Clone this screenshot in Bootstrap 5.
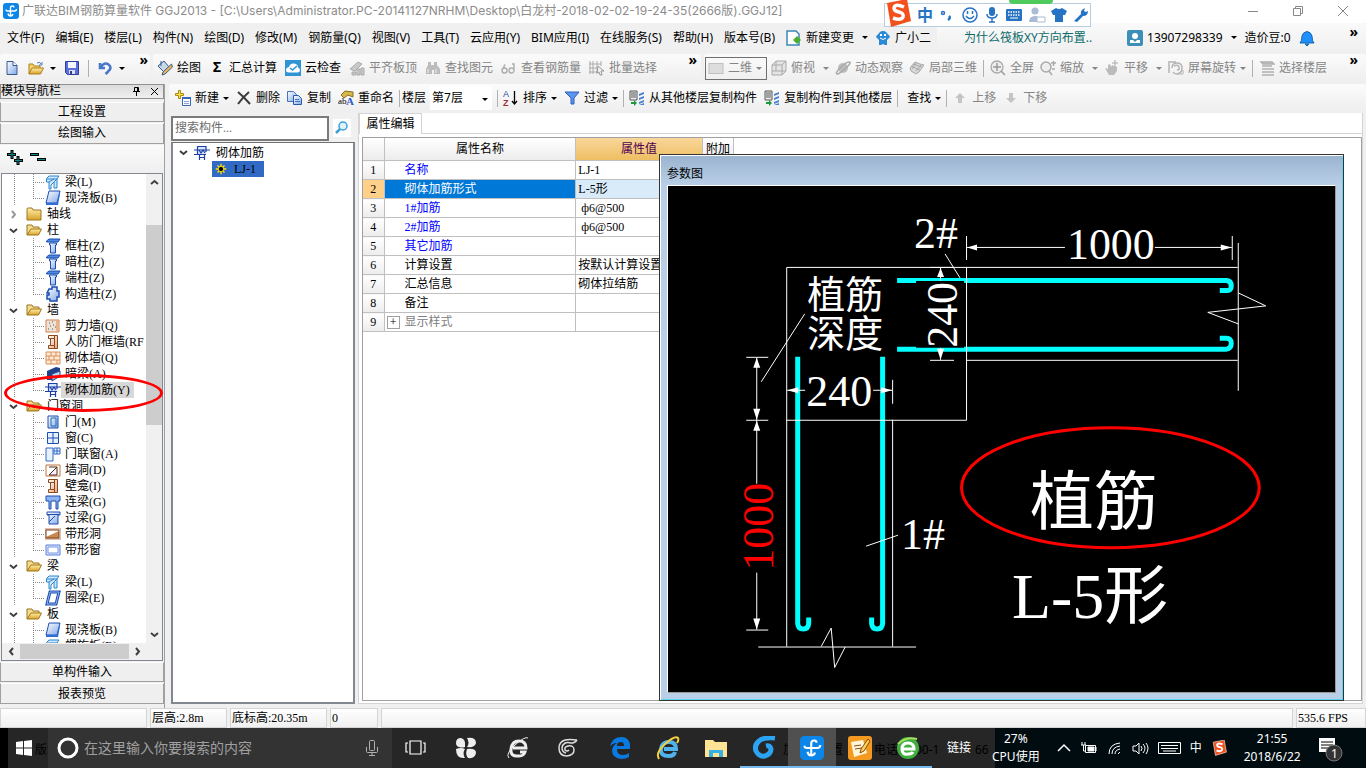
<!DOCTYPE html>
<html lang="zh-CN">
<head>
<meta charset="utf-8">
<meta name="viewport" content="width=device-width, initial-scale=1">
<title>广联达BIM钢筋算量软件 GGJ2013</title>
<link href="https://cdn.jsdelivr.net/npm/bootstrap@5.3.0/dist/css/bootstrap.min.css" rel="stylesheet">
<style>
:root{--ui:"Noto Sans","Noto Sans CJK SC",sans-serif;--song:"Liberation Serif","Noto Sans CJK SC",serif}
body{font:12px/16px var(--ui);background:#f0f0f0;color:#000;height:100vh;min-height:600px;overflow:hidden}
svg{display:block;flex:none}
button{font:inherit;color:inherit;background:none;border:0;padding:0;white-space:nowrap}
a{color:inherit;text-decoration:none;white-space:nowrap}
.ico{width:16px;height:16px}
.song{font-family:var(--song)}
.titlebar{height:23px;background:#fff;color:#8c8c8c;padding:0 16px 0 3px;gap:3px;font-family:Inter,"Noto Sans CJK SC",sans-serif}
.menubar{height:30px;padding-left:7px;margin-bottom:1px}
.menubar nav{gap:11px}
.notice{width:185px;padding-left:27px;color:#0c6b6b;height:30px;background:linear-gradient(#fafafa,#efefef);margin-left:6px}
.account{height:30px;background:linear-gradient(#fafafa,#efefef);flex:1;padding:0 4px 0 5px;border-radius:3px}
.strip{height:29px;background:linear-gradient(#fbfbfb,#eee);border-radius:3px;position:relative}
.tool{display:inline-flex;align-items:center;gap:4px}
.off{color:#858585}
.caret{width:0;height:0;border:3px solid transparent;border-top:3px solid currentColor;border-bottom:0;display:inline-block;flex:none}
.vsep{width:1px;height:17px;background:#b0b0b0}
.edit .vsep{margin:0 -2px}
.more{position:absolute;right:8px;top:-2px;font-weight:700;font-size:14px;line-height:16px}
.viewmode{border:1px solid #707070;width:62px;height:23px;padding:0 4px 0 2px;gap:4px}
.floor{width:62px;height:24px;background:#fff;border:0;font:inherit;appearance:none;padding:0 2px}
.dock{width:165px;border-right:1px solid #a0a0a0;gap:1px}
.dockhead{height:15px;border:1px solid #909090;background:linear-gradient(#dcdcdc,#efefef);gap:10px;padding-right:4px;margin-bottom:2px}
.dockbtn{height:21px;border:1px solid #a0a0a0;border-top-color:#fff;background:#efefef;width:100%;font-family:var(--song)}
.pm{height:28px;padding:0 7px;gap:7px;background:linear-gradient(#fbfbfb,#efefef)}
.treebox{border:1px solid #828790;background:#fff;margin:0 1px}
.tree{list-style:none;margin:0;padding:0;overflow:hidden;flex:1;min-width:0}
.tree li{height:16px;display:flex;align-items:center;white-space:nowrap;position:relative;padding-left:43px;gap:4px;font-family:var(--song)}
.tree li.fold{padding-left:7px;gap:5px}
.tree li.fold .ico{margin-left:3px}
.tree li:not(.fold){background:repeating-linear-gradient(#888 0 1px,transparent 1px 2px) 12px 0/1px 100% no-repeat,repeating-linear-gradient(#888 0 1px,transparent 1px 2px) 31px 0/1px 100% no-repeat,repeating-linear-gradient(90deg,#888 0 1px,transparent 1px 2px) 31px 8px/11px 1px no-repeat}
.tree li.end{background-size:1px 100%,1px 8px,11px 1px}
.tree li.sel span{background:#d8d8d8;margin-left:-4px;padding:0 4px}
.twist{width:9px;height:9px;fill:none;stroke:#404040;stroke-width:2}
.vbar{width:16px;background:#f0f0f0;padding:4px 0}
.vthumb{flex:0 1 200px;background:#cdcdcd;margin-top:38px}
.hbar{height:17px;background:#f0f0f0;padding:1px 20px 1px 5px;gap:4px}
.hthumb{background:#cdcdcd;flex:1;align-self:stretch}
.ring{position:absolute;left:4px;top:290px;width:159px;height:38px;border:3px solid red;border-radius:50%}
.mid{width:184px;margin-left:6px}
.finder{padding:3px 0 1px}
.search{height:25px;width:158px;border:2px solid #7a7a7a;background:#fff;font:12px/16px var(--song);padding:0 2px;border-radius:0}
.search::placeholder{color:#6d6d6d}
.parts{border:2px solid #828790;border-top:1px solid #707070;background:#fff;padding:2px 0 0 6px}
.parts .pick{background:#316ac5;width:52px;height:16px;margin-left:33px;gap:6px;padding-left:2px}
.prop{margin:0 3px 0 3px;background:#fff;border:1px solid #d4d4d4;border-top:0;position:relative}
.tabline{height:21px;border-bottom:1px solid #d4d4d4}
.tabon{background:#fff;border:1px solid #d4d4d4;border-bottom:0;width:63px;height:21px;font-family:var(--song)}
.gridbox{border:1px solid #a0a0a0;margin:3px 0 2px 3px;flex:1}
.ptable{border-collapse:collapse;font-family:var(--song);line-height:16px;table-layout:fixed;width:371px}
.ptable td,.ptable th{border:1px solid #c0c0c0;border-width:0 1px 1px 0;padding:0 2px;height:19px;font-weight:400;white-space:nowrap;overflow:hidden}
.ptable thead th{height:23px;text-align:center;background:linear-gradient(#fff,#ececec)}
.ptable thead th.hot{background:linear-gradient(#f9d69a,#eebf62);color:#500050}
.ptable tbody th{background:linear-gradient(#fff,#ececec);text-align:center}
.ptable td:nth-child(2){padding-left:20px}
.ptable .key{color:#00f}
.ptable tr.on th{background:#ffd08a}
.ptable tr.on td:nth-child(2){background:#0078d7;color:#fff}
.ptable tr.on td:nth-child(3){background:#d9ebf9}
.ptable .grp td:nth-child(2){padding-left:2px;color:#808080}
.plus{width:13px;height:13px;border:1px solid #a0a0a0;color:#000;display:inline-flex;align-items:center;justify-content:center;line-height:10px;margin-right:5px}
.param{position:absolute;left:300px;right:18px;top:41px;bottom:2px;border:1px solid #333;background:linear-gradient(#9ab3ce,#b9cfe8 30px);box-shadow:inset 1px 1px #fff,inset -1px -1px #5fd6f0;padding:0 7px 7px 7px}
.param header{height:30px;padding-top:11px}
.canvas{background:#000;border:1px solid #fff;border-right-color:#999;border-bottom-color:#999;flex:1;min-height:0;width:100%}
.canvas text{font-family:var(--song)}
.status{height:20px;gap:3px;font-family:var(--song)}
.status div{border:1px solid #d4d4d4;background:linear-gradient(#fff,#f0f0f0);padding:0 1px;line-height:18px;white-space:nowrap}
.taskbar{height:40px;background:#262626;color:#fff;position:relative;border-left:8px solid #000}
.start{width:40px;padding-left:8px;position:relative;z-index:1}
.ask{width:344px;height:40px;background:#333;padding:0 14px 0 8px;gap:4px;z-index:1}
.ask input{background:none;border:0;color:#a0a0a0;font:14px/20px var(--ui);flex:1;min-width:0;padding:0}
.ask input::placeholder{color:#a0a0a0}
.app{width:48px;height:40px;display:flex;align-items:center;justify-content:center;border:solid transparent;border-width:2px 0;z-index:1}
.app.run{border-bottom-color:#76b9ed;background-clip:padding-box}
.app.cur{background:#505050}
.app svg{width:24px;height:24px}
.ghost{position:absolute;color:#000;top:14px}
.tray{background:#000c10;flex:1;gap:9px;z-index:1;min-width:0}
.tray svg{fill:none;stroke:#fff;stroke-width:1}
.ime{position:absolute;left:884px;top:3px;width:207px;height:24px;border:1px solid #b8cde0;background:#fff;gap:5px;padding:0 10px 0 32px;z-index:3;color:#2673c4}
.ime .logo{position:absolute;left:-1px;top:-5px;width:27px;height:29px}
.ime .pill{position:absolute;left:124px;top:-4px;width:44px;height:4px;background:#4ecb5c;border-radius:0 0 6px 6px}
</style>
</head>
<body class="d-flex flex-column">
<svg width="0" height="0" class="position-absolute">
<defs>
<linearGradient id="gy" x2="0" y2="1"><stop stop-color="#fff0a8"/><stop offset="1" stop-color="#d8a12c"/></linearGradient>
<linearGradient id="gb" x2="1" y2="1"><stop stop-color="#fff"/><stop offset="1" stop-color="#7fa9ea"/></linearGradient>
<linearGradient id="go" x2="1" y2="1"><stop stop-color="#fff"/><stop offset="1" stop-color="#efa878"/></linearGradient>
<symbol id="i-app" viewBox="0 0 16 16"><rect width="16" height="16" rx="3" fill="#0b86e8"/><path d="M7.500 12.500V5q0-2 2-2 1.500 0 1.500 1.500M3 6.500q0 1.500 1.500 1.500h7q2 0 2-2M5 10.500q.5 2.500 2.500 2.500t2.500-2" fill="none" stroke="#fff" stroke-width="1.400"/></symbol>
<symbol id="i-new" viewBox="0 0 16 16"><path d="M3 1.500h6l4 4v9H3z" fill="url(#gb)" stroke="#3a5a8c"/><path d="M9 1.500v4h4" fill="#fff" stroke="#3a5a8c"/></symbol>
<symbol id="i-open" viewBox="0 0 16 16"><path d="M1 14V4h4l1 2h6v2" fill="#f6d36b" stroke="#ad7f1c"/><path d="M1 14l3-6h11.500l-3 6z" fill="url(#gy)" stroke="#ad7f1c"/><path d="M9 3q3-2 4 1m1-2v3h-3" fill="none" stroke="#4a7ab8"/></symbol>
<symbol id="i-save" viewBox="0 0 16 16"><path d="M1.500 1.500h13v13h-11l-2-2z" fill="#5a6fd8" stroke="#2c3c98"/><path d="M4 2h8v6H4z" fill="#f4f6ff"/><path d="M5 10h6v4H5z" fill="#dde"/><path d="M6 11h2v3H6z" fill="#2c3c98"/></symbol>
<symbol id="i-undo" viewBox="0 0 16 16"><path d="M3 3v5h5M3.500 7.500q4-6 8-3t0 6.500q-1 1.500-3 3" fill="none" stroke="#4a78c8" stroke-width="2.600"/></symbol>
<symbol id="i-draw" viewBox="0 0 16 16"><path d="M1 6l6-5 5 6-5 5z" fill="#c8d8e8" stroke="#335c86"/><path d="M4 1v5" stroke="#335c86"/><path d="M14.500 4L6 12l-1 3 3-1 7.500-7z" fill="#e9b65a" stroke="#3c5e8a"/></symbol>
<symbol id="i-cloud" viewBox="0 0 16 16"><rect width="16" height="16" fill="#2e94d4"/><path d="M4 12.500q-3 0-3-2.500T4 7q1-4 5-3.500t4 4q2 .5 2 2.500t-2 2.500z" fill="#fff"/><path d="M5 8l2.500 2L12 6" fill="none" stroke="#2e94d4" stroke-width="1.500"/></symbol>
<symbol id="i-gslab" viewBox="0 0 16 16"><path d="M1 9l8-7 4 2-7 7zM3 12h4v3H3zM8 9h3v6H8zM12 8h3v7h-3z" fill="#c8c8c8" stroke="#aaa"/></symbol>
<symbol id="i-find" viewBox="0 0 16 16"><path d="M3 2h3v3h3V2h3v3l3 4v5H9v-4H7v4H1V9l2-4z" fill="#bcbcbc"/><path d="M3 9v4M11 9v4" stroke="#eee"/></symbol>
<symbol id="i-glass" viewBox="0 0 16 16"><path d="M1 10.500a2.500 2.500 0 1 0 5 0a2.500 2.500 0 1 0-5 0l3-6M8 10.500a2.500 2.500 0 1 0 5 0a2.500 2.500 0 1 0-5 0M13 10V4h-2" fill="none" stroke="#adadad" stroke-width="1.400"/></symbol>
<symbol id="i-batch" viewBox="0 0 16 16"><path d="M1 1v13M4 1v13M8 1v13M0 4h12M0 8h10M0 12h10M12 1v5" stroke="#aaa" fill="none"/><path d="M9 6l6 5h-3l1 4-2 0-1-3-2 1z" fill="#f0f0f0" stroke="#999"/></symbol>
<symbol id="i-flat" viewBox="0 0 16 16"><rect x="1" y="3.500" width="14" height="10" fill="#ddd" stroke="#c0c0c0"/></symbol>
<symbol id="i-cube" viewBox="0 0 16 16"><path d="M1 5l4-4h10v10l-4 4H1z" fill="#e4e4e4" stroke="#aaa"/><path d="M1 5h10v10M11 5l4-4M5 1v10H1M5 11h10" fill="none" stroke="#aaa"/></symbol>
<symbol id="i-orbit" viewBox="0 0 16 16"><circle cx="8" cy="8" r="5" fill="#bdbdbd"/><path d="M3 14Q-1 14 5 8T14 2t-2 5-9 7" fill="none" stroke="#aaa" stroke-width="1.500"/></symbol>
<symbol id="i-part3d" viewBox="0 0 16 16"><path d="M1 8l5-6 5 2 4 1-5 7-3 2-5-3z" fill="#d8d8d8" stroke="#a8a8a8"/><path d="M3 9l4-6M7 11l5-6M2 6l9 4M4 4l9 3" stroke="#a8a8a8"/></symbol>
<symbol id="i-full" viewBox="0 0 16 16"><circle cx="7" cy="7" r="6" fill="#eee" stroke="#aaa" stroke-width="1.300"/><path d="M7 3v8M3 7h8M11 11l4 4" stroke="#999" stroke-width="1.500"/></symbol>
<symbol id="i-zoom" viewBox="0 0 16 16"><circle cx="6" cy="7" r="5" fill="#eee" stroke="#aaa" stroke-width="1.500"/><path d="M9 11l3 4M11 3h5M13.500 1v5M12 9h3" stroke="#aaa" stroke-width="1.500"/></symbol>
<symbol id="i-hand" viewBox="0 0 16 16"><path d="M1 8l3 1V5l2-1 1 3 1-2 2 1 3 1v4l-3 4H5z" fill="#bbb"/><path d="M11 0v7M8 3h6" stroke="#aaa"/></symbol>
<symbol id="i-rot" viewBox="0 0 16 16"><path d="M1 13V2h7" fill="none" stroke="#c4c4c4" stroke-width="2"/><path d="M4 8q0-5 5-5t5 5-5 6q-3 0-4-2M6 6q4-2 5 1t-2 3" fill="none" stroke="#b4b4b4" stroke-width="1.500"/><path d="M10 14h5v-4" fill="none" stroke="#b4b4b4"/></symbol>
<symbol id="i-floors" viewBox="0 0 16 16"><path d="M2 2h11l2 2H4zM3 6h10M3 9h12M3 12h12M3 15h12" fill="#ccc" stroke="#b0b0b0" stroke-width="1.400"/></symbol>
<symbol id="i-add" viewBox="0 0 16 16"><path d="M3.500.5h2v3h3v2h-3v3h-2v-3h-3v-2h3z" fill="#ffe04a" stroke="#a88a10"/><path d="M7.500 7.500h8v8h-8z" fill="#fff" stroke="#3a68b8"/><path d="M7 7h9v2H7z" fill="#3a68b8"/><path d="M9 11.500h5M9 13.500h5" stroke="#86a8dc"/></symbol>
<symbol id="i-del" viewBox="0 0 16 16"><path d="M2 2q6 5 12 12M13 2Q7 7 2 14" fill="none" stroke="#3c3c3c" stroke-width="2"/></symbol>
<symbol id="i-copy" viewBox="0 0 16 16"><path d="M.5 1.500h6l3 3v7h-9z" fill="url(#gb)" stroke="#4a74b8"/><path d="M6.500 5.500h5l3 3v6h-8z" fill="url(#gb)" stroke="#2d58a8"/><path d="M8 9.500h4M8 11.500h5" stroke="#4a74b8"/></symbol>
<symbol id="i-ren" viewBox="0 0 16 16"><path d="M3 5l4-4 8 1v5l-5-2-4 3z" fill="#d8b848" stroke="#8a6d20"/><text x="0" y="14" font-size="9" font-family="Liberation Serif" fill="#000">ab</text><text x="8" y="15" font-size="11" font-weight="700" font-family="Liberation Serif" fill="#2d58c8">A</text></symbol>
<symbol id="i-az" viewBox="0 0 16 16"><text x="0" y="7" font-size="9" font-family="Liberation Sans" fill="#24509c">A</text><text x="0" y="16" font-size="9" font-weight="700" font-family="Liberation Sans" fill="#a03038">Z</text><path d="M11.500 1v12M9 11l2.500 3 2.500-3" fill="none" stroke="#000" stroke-width="1.300"/></symbol>
<symbol id="i-fun" viewBox="0 0 16 16"><path d="M1 2h14L10 8v6H7V8z" fill="#5b96ea" stroke="#2a5fc0"/></symbol>
<symbol id="i-lay" viewBox="0 0 16 16"><path d="M1 1h7v9H1zM2 3h5M2 5h5M2 7h5" fill="#eee" stroke="#555"/><path d="M10 4l5-2v2l-5 2zM10 8l5-2v2l-5 2zM10 12l5-2v2l-5 2zM10 15l5-2v2h-5z" fill="#4b7fd0"/><path d="M2 12h3v-2l3 3-3 3v-2H2z" fill="#1a9a3a"/></symbol>
<symbol id="i-up" viewBox="0 0 16 16"><path d="M8 3l5 5h-3v5H6V8H3z" fill="#c4c4c4"/></symbol>
<symbol id="i-dn" viewBox="0 0 16 16"><path d="M8 13l5-5h-3V3H6v5H3z" fill="#c4c4c4"/></symbol>
<symbol id="i-fclosed" viewBox="0 0 16 16"><path d="M1 14V3q0-1 1-1h4l1 2h8v10z" fill="url(#gy)" stroke="#a0761c"/></symbol>
<symbol id="i-fopen" viewBox="0 0 16 16"><path d="M1 13V3h5l1 2h6v3" fill="#f3dc92" stroke="#a0761c"/><path d="M1 13l4-6h10.500l-3 6z" fill="url(#gy)" stroke="#a0761c"/></symbol>
<symbol id="i-beam" viewBox="0 0 16 16"><path d="M1.500 4.500L4 2h10l-2 3v9H9V8l-3 3v4H4V8H1.500z" fill="#cfe6fb" stroke="#2a86d0"/><path d="M2 5h10M4 8l5-3M6 11l6-6" stroke="#2a86d0"/></symbol>
<symbol id="i-slab" viewBox="0 0 16 16"><path d="M4 1h11l-3 12H1z" fill="url(#gb)" stroke="#1c4db0"/><path d="M1 13h11l3-12v3l-2 11H1z" fill="#2f6fd8"/></symbol>
<symbol id="i-col" viewBox="0 0 16 16"><path d="M1.500 3L4 1h11l-2 3H1.500z" fill="#4a8ae0" stroke="#1c4db0"/><path d="M4.500 5h7v2h-1v8h-5V7h-1z" fill="url(#gb)" stroke="#1c4db0"/></symbol>
<symbol id="i-gcol" viewBox="0 0 16 16"><path d="M4 3h3V1h5v4h2v6h-2v4H5v-2H2V9h2V7H2z" fill="url(#gb)" stroke="#1c4db0" stroke-width="1.500"/></symbol>
<symbol id="i-wall" viewBox="0 0 16 16"><path d="M1 2h13v12H1z" fill="#eee3d8" stroke="#d0824c"/><path d="M4 5h1M7 4h1M5 8h1M8 7h1M3 11h1M7 11h1M10 9h1" stroke="#555"/><path d="M12 3v10" stroke="#f0b080" stroke-width="2"/></symbol>
<symbol id="i-door2" viewBox="0 0 16 16"><path d="M3.500 1.500h9v13h-9v-3h2v-7h-2z" fill="url(#go)" stroke="#8a4a20"/><path d="M5.500 4.500h4v7h-4M9.500 2v12" fill="none" stroke="#8a4a20"/></symbol>
<symbol id="i-brick" viewBox="0 0 16 16"><path d="M1 2h14v12H1zM1 6h14M1 10h14M6 2v4M11 2v4M4 6v4M9 6v4M6 10v4M12 10v4" fill="#fde9d4" stroke="#d8905a"/></symbol>
<symbol id="i-dbeam" viewBox="0 0 16 16"><path d="M2 5l9-4 4 1v3L7 8v6H2z" fill="#1f3f88"/><path d="M7 8l8-3v5l-8 5z" fill="#b9d8f6" stroke="#1f3f88"/></symbol>
<symbol id="i-lj" viewBox="0 0 16 16"><path d="M3 1.500h9v8H3z" fill="#d5e2fa"/><path d="M3.500 1v9M3 1.500h9M12 1v6M0 5h16M0 9.500h12M5.500 9v6M10.500 9v6M5 5l2 3 2-3 2 3M5 12.500h5" fill="none" stroke="#1c3fa8" stroke-width="1.200"/></symbol>
<symbol id="i-door" viewBox="0 0 16 16"><path d="M3 2h10v12H3z" fill="url(#gb)" stroke="#1c4db0"/><path d="M6 4h5v8H6z" fill="none" stroke="#1c6db0"/></symbol>
<symbol id="i-win" viewBox="0 0 16 16"><path d="M2.500 2.500h11v11h-11zM8 2v11M3 8h10" fill="#e6f0ff" stroke="#1c4db0"/></symbol>
<symbol id="i-dw" viewBox="0 0 16 16"><path d="M1 2h7v13H1zM9 2h6v6H9zM9 5h6M12 2v6" fill="#e6f0ff" stroke="#3668c4"/></symbol>
<symbol id="i-hole" viewBox="0 0 16 16"><path d="M1 3h14v11H1z" fill="#fff" stroke="#c0703c"/><path d="M4 5h8v8H4l8-8" fill="#fbe" fill-opacity=".2" stroke="#4a2a18"/></symbol>
<symbol id="i-lbeam" viewBox="0 0 16 16"><path d="M1 2h14v5h-2v8h-2V7H6v8H4V7H1z" fill="#8cb4f0" stroke="#1c4db0"/></symbol>
<symbol id="i-gbeam" viewBox="0 0 16 16"><path d="M2 2h13v3h-2v9H4V5H2z" fill="url(#gb)" stroke="#1c4db0"/><path d="M2 4.500h12M4 12l6-6" stroke="#1c4db0"/></symbol>
<symbol id="i-bhole" viewBox="0 0 16 16"><path d="M0 3h16v10H0z" fill="#fff" stroke="#c08060"/><path d="M1 11L14 5v7H1z" fill="#c98850"/><path d="M1 4h13v8H1z" fill="none" stroke="#7a4218"/></symbol>
<symbol id="i-bwin" viewBox="0 0 16 16"><path d="M1 3h14v10H1z" fill="#dbe6ff" stroke="#5a80d8"/><path d="M3 5h10v6H3z" fill="#fff" stroke="#7898e0"/></symbol>
<symbol id="i-ring" viewBox="0 0 16 16"><path d="M5 2h9l-3 12H2z" fill="#fff" stroke="#1c4db0" stroke-width="3"/><path d="M5 2h9l-3 12H2z" fill="none" stroke="#8fb8f0"/></symbol>
<symbol id="t-down" viewBox="0 0 9 9"><path d="M1 3l3.500 3L8 3"/></symbol>
<symbol id="t-right" viewBox="0 0 9 9"><path d="M3 1l3 3.500L3 8"/></symbol>
<symbol id="t-up" viewBox="0 0 9 9"><path d="M1 6l3.500-3L8 6"/></symbol>
<symbol id="t-left" viewBox="0 0 9 9"><path d="M6 1L3 4.500 6 8"/></symbol>
<symbol id="i-s" viewBox="0 0 27 29"><path d="M3 4L23 0l4 22-20 6z" fill="#f2511b"/><path d="M20 8q-9-4-10 1 0 3 5 4t4 5q-2 4-10 1" fill="none" stroke="#fff" stroke-width="3.500"/></symbol>
</defs>
</svg>

<header class="titlebar d-flex align-items-center">
  <svg class="ico"><use href="#i-app"/></svg>
  <span class="flex-grow-1 text-nowrap">广联达BIM钢筋算量软件 GGJ2013 - [C:\Users\Administrator.PC-20141127NRHM\Desktop\白龙村-2018-02-02-19-24-35(2666版).GGJ12]</span>
  <div class="d-flex" style="gap:24px">
    <button aria-label="最小化"><svg width="20" height="20" fill="none" stroke="#888"><path d="M0 10.500h10"/></svg></button>
    <button aria-label="还原"><svg width="20" height="20" fill="none" stroke="#888"><path d="M1.500 7.500h7v7h-7zM3.500 7V5.500h7v7H9"/></svg></button>
    <button aria-label="关闭"><svg width="14" height="20" fill="none" stroke="#888"><path d="M2 5l10 10M12 5L2 15"/></svg></button>
  </div>
</header>
<div class="ime d-flex align-items-center">
  <svg class="logo"><use href="#i-s"/></svg><span class="pill"></span>
  <b class="fs-6" style="line-height:16px">中</b>
  <svg width="18" height="16" fill="none" stroke="#2673c4" stroke-width="1.500"><circle cx="5" cy="6" r="1.500"/><path d="M11 9q2 2-1 4" stroke-width="2.500"/></svg>
  <svg width="18" height="16" fill="none" stroke="#2673c4" stroke-width="1.500"><circle cx="9" cy="8" r="7"/><path d="M5 9q4 5 8 0M6.500 4v3M11.500 4v3"/></svg>
  <svg width="16" height="16" fill="#2673c4"><rect x="5" y="0" width="6" height="9" rx="3"/><path d="M3 7q0 4 5 4t5-4M8 11v4M5 15h6" fill="none" stroke="#2673c4" stroke-width="1.500"/></svg>
  <svg width="18" height="16"><rect x="1" y="2" width="16" height="12" rx="1" fill="#2673c4"/><path d="M3 5h12M3 8h12" stroke="#fff" stroke-width="1.500" stroke-dasharray="1.500 1"/><path d="M5 11h8" stroke="#fff"/></svg>
  <svg width="18" height="16" fill="#aabbd6"><circle cx="7" cy="4" r="3.500"/><path d="M1 15q0-7 8-6v6z"/><path d="M9 10h8v5H9z" fill="#fff" stroke="#aabbd6"/></svg>
  <svg width="16" height="16" fill="#2673c4"><path d="M5 1q3 2 6 0l5 3-2 4h-2v7H4V8H2L0 4z"/></svg>
  <svg width="16" height="16"><path d="M2 14l7-7q-1-4 4-6l-1 3 2 1 2-1q0 5-5 5l-6 6z" fill="#2673c4"/></svg>
</div>

<div class="menubar d-flex align-items-center">
  <nav class="d-flex align-items-center">
    <a href="#">文件(F)</a><a href="#">编辑(E)</a><a href="#">楼层(L)</a><a href="#">构件(N)</a><a href="#">绘图(D)</a><a href="#">修改(M)</a><a href="#">钢筋量(Q)</a><a href="#">视图(V)</a><a href="#">工具(T)</a><a href="#">云应用(Y)</a><a href="#">BIM应用(I)</a><a href="#">在线服务(S)</a><a href="#">帮助(H)</a><a href="#">版本号(B)</a>
    <button class="tool"><svg class="ico" viewBox="0 0 16 16"><path d="M1 1h9l3 3v11H1z" fill="#fff" stroke="#3a86b8" stroke-width="1.500"/><path d="M11 6l4 4-4 4-4-4z" fill="#48b02c"/></svg>新建变更<i class="caret ms-1"></i></button>
    <button class="tool" style="margin-left:-4px"><svg class="ico" viewBox="0 0 16 16"><path d="M2 5l2-1h8l2 1 1 2-3 3v5l-2 0-2-1-2 1-2 0v-5L1 7z" fill="#2b8ad6"/><circle cx="8" cy="6" r="5" fill="#2b8ad6"/><path d="M5 8q3 3 6 0" stroke="#fff" fill="none"/><path d="M5 4h2v2H5zM9 4h2v2H9z" fill="#fff"/></svg>广小二</button>
  </nav>
  <div class="notice d-flex align-items-center"><a href="#">为什么筏板XY方向布置..</a></div>
  <div class="account d-flex align-items-center position-relative">
    <svg class="ico me-1" viewBox="0 0 16 16"><rect width="16" height="16" rx="2" fill="#3b8fb8"/><circle cx="8" cy="6" r="3" fill="#fff"/><path d="M3 13V10h3l2 2 2-2h3v3z" fill="#fff"/></svg>
    <button>13907298339</button><i class="caret mx-2"></i><a href="#">造价豆:0</a>
    <svg class="ms-2" width="16" height="16"><path d="M1 13q2-2 2-7 1-4 5-4.500 4 .5 5 4.500 0 5 2 7zM6 14h4l-2 2z" fill="#1e90ff" stroke="#1766a8"/></svg>
    <span class="more" style="top:1px">»</span>
  </div>
</div>

<div class="d-flex mb-1 flex-shrink-0" style="gap:3px">
  <div class="strip d-flex align-items-center ps-1" style="width:150px;gap:8px">
    <button aria-label="新建"><svg class="ico"><use href="#i-new"/></svg></button>
    <button class="tool" aria-label="打开" style="gap:6px"><svg class="ico"><use href="#i-open"/></svg><i class="caret"></i></button>
    <button aria-label="保存"><svg class="ico"><use href="#i-save"/></svg></button>
    <span class="vsep"></span>
    <button class="tool" aria-label="撤销" style="gap:6px"><svg class="ico"><use href="#i-undo"/></svg><i class="caret"></i></button>
    <span class="more" style="right:2px">»</span>
  </div>
  <div class="strip d-flex align-items-center ps-1 gap-2" style="width:548px">
    <button class="tool"><svg class="ico"><use href="#i-draw"/></svg>绘图</button>
    <button class="tool"><b class="ico lh-1 text-center" style="font-size:14px">Σ</b>汇总计算</button>
    <button class="tool"><svg class="ico"><use href="#i-cloud"/></svg>云检查</button>
    <button class="tool off"><svg class="ico"><use href="#i-gslab"/></svg>平齐板顶</button>
    <button class="tool off"><svg class="ico"><use href="#i-find"/></svg>查找图元</button>
    <button class="tool off"><svg class="ico"><use href="#i-glass"/></svg>查看钢筋量</button>
    <button class="tool off"><svg class="ico"><use href="#i-batch"/></svg>批量选择</button>
    <span class="more" style="right:4px">»</span>
  </div>
  <div class="strip d-flex align-items-center flex-grow-1 off" style="gap:6px">
    <button class="viewmode d-flex align-items-center" style="margin-left:1px;margin-right:-2px"><svg class="ico"><use href="#i-flat"/></svg>二维<i class="caret"></i></button>
    <button class="tool"><svg class="ico"><use href="#i-cube"/></svg>俯视<i class="caret ms-1"></i></button>
    <button class="tool"><svg class="ico"><use href="#i-orbit"/></svg>动态观察</button>
    <button class="tool"><svg class="ico"><use href="#i-part3d"/></svg>局部三维</button>
    <span class="vsep"></span>
    <button class="tool"><svg class="ico"><use href="#i-full"/></svg>全屏</button>
    <button class="tool"><svg class="ico"><use href="#i-zoom"/></svg>缩放<i class="caret ms-1"></i></button>
    <button class="tool"><svg class="ico"><use href="#i-hand"/></svg>平移<i class="caret ms-1"></i></button>
    <button class="tool"><svg class="ico"><use href="#i-rot"/></svg>屏幕旋转<i class="caret"></i></button>
    <span class="vsep"></span>
    <button class="tool"><svg class="ico"><use href="#i-floors"/></svg>选择楼层</button>
    <span class="more text-black">»</span>
  </div>
</div>

<main class="d-flex flex-grow-1" style="min-height:0;margin-top:-3px">
  <aside class="dock d-flex flex-column flex-shrink-0 position-relative">
    <div class="dockhead song d-flex align-items-center"><span class="flex-grow-1">模块导航栏</span>
      <svg width="8" height="10" fill="none" stroke="#000"><path d="M1 5.500h7M2.500 5V1.500h4V5M4.500 6v4M5.500 2v3"/></svg>
      <svg width="9" height="9" fill="none" stroke="#000"><path d="M1 1l7 7M8 1L1 8"/></svg></div>
    <button class="dockbtn">工程设置</button>
    <button class="dockbtn">绘图输入</button>
    <div class="pm d-flex align-items-center">
      <svg width="16" height="16" fill="none"><path d="M5 0v9M0 4.500h9M11 6v9M7 10.500h9" stroke="#000" stroke-width="3"/><path d="M5 1v7M1 4.500h7M11 7v7M8 10.500h7" stroke="#0c8a8a"/></svg>
      <svg width="16" height="16" fill="none"><path d="M0 4.500h9M7 9.500h9" stroke="#000" stroke-width="3"/><path d="M1 4.500h7M8 9.500h7" stroke="#0c8a8a"/></svg>
    </div>
    <div class="treebox d-flex flex-column flex-grow-1" style="min-height:0">
      <div class="d-flex flex-grow-1" style="min-height:0">
      <ul class="tree">
        <li><svg class="ico"><use href="#i-beam"/></svg><span>梁(L)</span></li>
        <li class="end"><svg class="ico"><use href="#i-slab"/></svg><span>现浇板(B)</span></li>
        <li class="fold"><svg class="twist" style="stroke:#999"><use href="#t-right"/></svg><svg class="ico"><use href="#i-fclosed"/></svg><span>轴线</span></li>
        <li class="fold"><svg class="twist"><use href="#t-down"/></svg><svg class="ico"><use href="#i-fopen"/></svg><span>柱</span></li>
        <li><svg class="ico"><use href="#i-col"/></svg><span>框柱(Z)</span></li>
        <li><svg class="ico"><use href="#i-col"/></svg><span>暗柱(Z)</span></li>
        <li><svg class="ico"><use href="#i-col"/></svg><span>端柱(Z)</span></li>
        <li class="end"><svg class="ico"><use href="#i-gcol"/></svg><span>构造柱(Z)</span></li>
        <li class="fold"><svg class="twist"><use href="#t-down"/></svg><svg class="ico"><use href="#i-fopen"/></svg><span>墙</span></li>
        <li><svg class="ico"><use href="#i-wall"/></svg><span>剪力墙(Q)</span></li>
        <li><svg class="ico"><use href="#i-door2"/></svg><span>人防门框墙(RF</span></li>
        <li><svg class="ico"><use href="#i-brick"/></svg><span>砌体墙(Q)</span></li>
        <li><svg class="ico"><use href="#i-dbeam"/></svg><span>暗梁(A)</span></li>
        <li class="end sel"><svg class="ico"><use href="#i-lj"/></svg><span>砌体加筋(Y)</span></li>
        <li class="fold"><svg class="twist"><use href="#t-down"/></svg><svg class="ico"><use href="#i-fopen"/></svg><span>门窗洞</span></li>
        <li><svg class="ico"><use href="#i-door"/></svg><span>门(M)</span></li>
        <li><svg class="ico"><use href="#i-win"/></svg><span>窗(C)</span></li>
        <li><svg class="ico"><use href="#i-dw"/></svg><span>门联窗(A)</span></li>
        <li><svg class="ico"><use href="#i-hole"/></svg><span>墙洞(D)</span></li>
        <li><svg class="ico"><use href="#i-door2"/></svg><span>壁龛(I)</span></li>
        <li><svg class="ico"><use href="#i-lbeam"/></svg><span>连梁(G)</span></li>
        <li><svg class="ico"><use href="#i-gbeam"/></svg><span>过梁(G)</span></li>
        <li><svg class="ico"><use href="#i-bhole"/></svg><span>带形洞</span></li>
        <li class="end"><svg class="ico"><use href="#i-bwin"/></svg><span>带形窗</span></li>
        <li class="fold"><svg class="twist"><use href="#t-down"/></svg><svg class="ico"><use href="#i-fopen"/></svg><span>梁</span></li>
        <li><svg class="ico"><use href="#i-beam"/></svg><span>梁(L)</span></li>
        <li class="end"><svg class="ico"><use href="#i-ring"/></svg><span>圈梁(E)</span></li>
        <li class="fold"><svg class="twist"><use href="#t-down"/></svg><svg class="ico"><use href="#i-fopen"/></svg><span>板</span></li>
        <li><svg class="ico"><use href="#i-slab"/></svg><span>现浇板(B)</span></li>
        <li><svg class="ico"><use href="#i-beam"/></svg><span>螺旋板(B)</span></li>
      </ul>
      <div class="vbar d-flex flex-column align-items-center"><svg class="twist"><use href="#t-up"/></svg><div class="vthumb w-100"></div><svg class="twist mt-auto"><use href="#t-down"/></svg></div>
      </div>
      <div class="hbar d-flex align-items-center"><svg class="twist"><use href="#t-left"/></svg><div class="hthumb"></div><svg class="twist"><use href="#t-right"/></svg></div>
    </div>
    <button class="dockbtn">单构件输入</button>
    <button class="dockbtn mb-1">报表预览</button>
    <div class="ring"></div>
  </aside>

  <div class="d-flex flex-column flex-grow-1" style="min-width:0">
    <div class="strip edit d-flex align-items-center ms-1 flex-shrink-0" style="gap:7px;padding-left:6px">
      <button class="tool"><svg class="ico"><use href="#i-add"/></svg>新建<i class="caret"></i></button>
      <button class="tool"><svg class="ico"><use href="#i-del"/></svg>删除</button>
      <button class="tool"><svg class="ico"><use href="#i-copy"/></svg>复制</button>
      <button class="tool"><svg class="ico"><use href="#i-ren"/></svg>重命名</button>
      <span class="vsep"></span>
      <label for="floor" style="margin-left:-3px">楼层</label>
      <div class="position-relative d-flex" style="margin-left:-3px"><select id="floor" class="floor"><option>第7层</option></select><i class="caret position-absolute end-0 top-50 me-1"></i></div>
      <span class="vsep"></span>
      <button class="tool"><svg class="ico"><use href="#i-az"/></svg>排序<i class="caret"></i></button>
      <button class="tool"><svg class="ico"><use href="#i-fun"/></svg>过滤<i class="caret"></i></button>
      <span class="vsep"></span>
      <button class="tool"><svg class="ico"><use href="#i-lay"/></svg>从其他楼层复制构件</button>
      <button class="tool"><svg class="ico"><use href="#i-lay"/></svg>复制构件到其他楼层</button>
      <span class="vsep"></span>
      <button class="tool ms-1">查找<i class="caret"></i></button>
      <span class="vsep"></span>
      <button class="tool off"><svg class="ico"><use href="#i-up"/></svg>上移</button>
      <button class="tool off"><svg class="ico"><use href="#i-dn"/></svg>下移</button>
    </div>
    <div class="d-flex flex-grow-1" style="min-height:0">
      <section class="mid d-flex flex-column flex-shrink-0 pb-1">
        <div class="finder d-flex align-items-center"><input class="search" type="text" placeholder="搜索构件..." aria-label="搜索构件"><svg class="ms-1" width="18" height="18" viewBox="0 0 18 18"><path d="M0 0h18v18H0z" fill="#fff"/><circle cx="10" cy="7" r="4" fill="#dff1fc" stroke="#3f9fd8" stroke-width="1.500"/><path d="M7 10l-4 4" stroke="#3f9fd8" stroke-width="2.500"/></svg></div>
        <div class="parts song flex-grow-1">
          <div class="d-flex align-items-center" style="gap:6px"><svg class="twist"><use href="#t-down"/></svg><svg class="ico"><use href="#i-lj"/></svg><span>砌体加筋</span></div>
          <div class="pick d-flex align-items-center"><svg width="14" height="14" viewBox="0 0 16 16" fill="none"><path d="M8 2v12M2 8h12M4 4l8 8M12 4l-8 8" stroke="#ffe600" stroke-width="1.500"/><circle cx="8" cy="8" r="3" fill="#000" stroke="#ffe600"/></svg>LJ-1</div>
        </div>
      </section>
      <section class="prop d-flex flex-column flex-grow-1 mb-1">
        <div class="tabline d-flex"><button class="tabon">属性编辑</button></div>
        <div class="gridbox">
          <table class="ptable">
            <colgroup><col style="width:21px"><col style="width:191px"><col style="width:126px"><col style="width:31px"></colgroup>
            <thead><tr><th></th><th>属性名称</th><th class="hot">属性值</th><th>附加</th></tr></thead>
            <tbody>
            <tr><th>1</th><td class="key">名称</td><td>LJ-1</td><td></td></tr>
            <tr class="on"><th>2</th><td>砌体加筋形式</td><td>L-5形</td><td></td></tr>
            <tr><th>3</th><td class="key">1#加筋</td><td>&nbsp;ф6@500</td><td></td></tr>
            <tr><th>4</th><td class="key">2#加筋</td><td>&nbsp;ф6@500</td><td></td></tr>
            <tr><th>5</th><td class="key">其它加筋</td><td></td><td></td></tr>
            <tr><th>6</th><td>计算设置</td><td>按默认计算设置</td><td></td></tr>
            <tr><th>7</th><td>汇总信息</td><td>砌体拉结筋</td><td></td></tr>
            <tr><th>8</th><td>备注</td><td></td><td></td></tr>
            <tr class="grp"><th>9</th><td><span class="plus">+</span>显示样式</td><td></td><td></td></tr>
            </tbody>
          </table>
        </div>
        <div class="param d-flex flex-column">
          <header>参数图</header>
          <svg class="canvas" viewBox="668 186 667 507" fill="none" stroke="#fff">
            <g stroke="#0ff" stroke-width="5">
              <path d="M897 280.500H1227Q1231.500 281 1231.500 286T1227 290.500H1220M897 349.500H1226Q1231.500 349 1231.500 343.500T1226 338.500H1220"/>
              <path d="M797.500 357V624Q798 629.500 803 629.500T808.500 624V618M882.500 357V624Q882 629.500 877 629.500T871.500 624V618"/>
            </g>
            <path d="M916 281h48v67h-48z" fill="#000" stroke="none"/>
            <path d="M786.500 647V267.500H1238M966.500 267V420.500H786M892.500 420V647M966 360.500H1238M758 647.500H916M1238.500 243V391"/>
            <path d="M967 247.500H1065M1155 247.500H1232M966.500 236V260M1232.500 236V260M930 360.500H954M930 267.500H954M940.500 268V281M940.500 348V360"/>
            <path d="M787 390.500H805M873 390.500H892M892.500 380V404M746 357.500H768M746 420.500H768M746 630.500H768M756.500 358V484M756.500 573V630"/>
            <path d="M945 254L960 278M804.500 314L761 382M866 546.500L898 535.500M1238.500 293L1266 306 1208 312.500 1238.500 324M821 647L831 628.500 834.500 668 845 647.500"/>
            <path stroke="none" fill="#fff" d="M967 247.500l10-3v6zM1232 247.500l-11-3v6zM940.500 268l-3.500 9h7zM940.500 360l-3.500-11h7zM787 390.500l11-3v6zM892 390.500l-11-3v6zM756.500 358l-3.500 10h7zM756.500 420l-3.500-11h7zM756.500 421l-3.500 10h7zM756.500 630l-3.500-11h7z"/>
            <g fill="#fff" stroke="none" font-size="44">
              <text x="1067" y="259">1000</text><text x="914" y="248">2#</text><text x="806" y="406">240</text><text x="901" y="549">1#</text>
              <text transform="translate(957 348) rotate(-90)">240</text>
              <text transform="translate(773 571) rotate(-90)" fill="red">1000</text>
              <g font-size="38"><text x="807" y="308">植筋</text><text x="807" y="347">深度</text></g>
              <g font-size="64"><text x="1030" y="524">植筋</text><text x="1012" y="618">L-5形</text></g>
            </g>
            <ellipse cx="1110.500" cy="488" rx="149" ry="60" stroke="red" stroke-width="3"/>
          </svg>
        </div>
      </section>
    </div>
  </div>
</main>

<footer class="status d-flex flex-shrink-0">
  <div style="width:147px"></div><div style="width:77px">层高:2.8m</div><div style="width:97px">底标高:20.35m</div><div style="width:48px">0</div><div class="flex-grow-1"></div><div style="width:70px">535.6 FPS</div>
</footer>

<div class="taskbar d-flex align-items-center flex-shrink-0">
  <span class="ghost" style="left:27px">版本</span><span class="ghost" style="left:775px">加密锁设置</span><span class="ghost" style="left:866px">电话:4000-1</span><span class="ghost" style="left:967px">66</span>
  <button class="start" aria-label="开始"><svg width="16" height="16" fill="#fff"><path d="M0 2l7-1v6.500H0zM8 1l8-1v7.500H8zM0 8.500h7V15l-7-1zM8 8.500h8V16l-8-1z"/></svg></button>
  <div class="ask d-flex align-items-center">
    <svg width="24" height="24" fill="none" stroke="#fff" stroke-width="3"><circle cx="12" cy="12" r="9"/></svg>
    <input type="text" placeholder="在这里输入你要搜索的内容" aria-label="搜索">
    <svg width="12" height="18" fill="none" stroke="#b0b0b0"><rect x="3.500" y="1.500" width="5" height="10" rx="1"/><path d="M.5 8v4.500q0 1 1 1h9q1 0 1-1V8M6 14v3M3 16.500h6"/></svg>
  </div>
  <button class="app" aria-label="任务视图"><svg viewBox="0 0 24 24" fill="none" stroke="#fff" stroke-width="1.200"><path d="M6 5h11v13H6zM4 7H2v9h2M19 7h2v9h-2"/></svg></button>
  <button class="app" style="margin-left:2px" aria-label="应用"><svg viewBox="0 0 24 24" fill="#eee"><path d="M2 7q0-5 5-5 5 1 4 9-3 1-6 0-3-1-3-4zM13 2q9-1 9 5-1 5-9 4 3-4 0-9zM2 13q5-2 9 0-3 4 0 9-9 1-9-9zM13 13q9-1 9 4-1 6-8 5-3-3-1-9z"/></svg></button>
  <button class="app" style="margin-left:4px" aria-label="浏览器"><svg viewBox="0 0 24 24" fill="none" stroke="#eee"><path d="M7 12h13q0-7-7-7t-8 8 8 7q5 0 6-4h-5" stroke-width="3"/><path d="M3 22Q-1 18 9 9T22 2"/></svg></button>
  <button class="app" style="margin-left:2px" aria-label="浏览器"><svg viewBox="0 0 24 24" fill="none" stroke="#ddd" stroke-width="1.500"><path d="M21 4q-8-1-12 0-6 2-6 8 0 8 8 8 7-1 7-6 0-5-6-4-4 1-3 4 2 2 4 0M21 4q-2 3-6 3-8-2-9 5 0 4 4 5"/></svg></button>
  <button class="app" style="margin-left:4px" aria-label="Edge"><svg viewBox="0 0 24 24"><path d="M2 11Q4 1 13 1q10 0 9 12H9q0 6 6 6 4 0 6-2v4q-3 2-8 2-9-1-9-9 1-5 5-7-5 0-7 4zM9 10h7q0-4-3-4-4 0-4 4z" fill="#0a7ae0"/></svg></button>
  <button class="app" aria-label="Internet Explorer"><svg viewBox="0 0 24 24" fill="none"><path d="M8 13h12q0-7-7-7t-8 7 8 7q5 0 6-4" stroke="#4fb4ee" stroke-width="4"/><path d="M3 23Q-1 17 9 8T22 2q1 2-1 5" stroke="#f4cf3c" stroke-width="2"/></svg></button>
  <button class="app" aria-label="文件资源管理器"><svg viewBox="0 0 24 24"><path d="M1 4h8l2 2h12v15H1z" fill="#ffe394"/><path d="M5 21v-7h14v7h-4v-4H9v4z" fill="#38b0e4"/></svg></button>
  <button class="app run" aria-label="G"><svg viewBox="0 0 24 24" fill="none" stroke="#2ca4f4"><path d="M23 2q-12-1-16 3-5 4-3 10 3 6 9 5 6-2 6-7-1-4-5-3" stroke-width="5"/></svg></button>
  <button class="app run cur" aria-label="广联达"><svg><use href="#i-app"/></svg></button>
  <button class="app run" aria-label="记事"><svg viewBox="0 0 24 24"><rect width="24" height="24" rx="3" fill="#f49a20"/><path d="M3 6l12-2 4 13-13 4z" fill="#fff6d8"/><path d="M6 10l7-1M7 13l7-1M20 3l-7 10-1 4 4-2 6-10z" stroke="#8a4a10" fill="#fbd25a"/></svg></button>
  <button class="app run" aria-label="360浏览器"><svg viewBox="0 0 24 24"><circle cx="12" cy="12" r="11" fill="#3fae3c"/><path d="M6 13h12q0-6-6-6t-6 6 6 5q4 0 5-2" fill="none" stroke="#fff" stroke-width="3"/><path d="M2 8q8-8 19-5" stroke="#a8e060" stroke-width="2" fill="none"/></svg></button>
  <span style="margin:0 24px 0 15px">链接</span>
  <div class="tray d-flex align-items-center h-100">
    <div class="text-center" style="line-height:18px;margin-left:-3px">27%<br>CPU使用</div>
    <svg class="ms-2" width="14" height="16"><path d="M1 11l6-6 6 6" stroke-width="1.500"/></svg>
    <svg width="18" height="16"><path d="M5.500 5.500h10v7h-10zM16 7v4M2 2v3M5 2v3M1 5h5M3.500 5v6h2"/><path d="M8 7h6v4H8z" fill="#fff"/></svg>
    <svg width="16" height="16"><path d="M2 14Q2 4 13 3M5 14q0-7 8-8M8 14q0-4 5-5M11 14l2-2"/></svg>
    <svg width="17" height="16"><path d="M1 6h3l3-3v11l-3-3H1zM9 6q2 2 0 5M11 4q4 4 0 9M14 3q4 5 0 11"/></svg>
    <svg width="23" height="16"><path d="M.5 2.500h22v11H.5zM5 11h13M3 5.500h17M3 8.500h17"/></svg>
    <span>中</span>
    <svg class="ico"><use href="#i-s"/></svg>
    <div class="text-center ms-2" style="line-height:18px">21:55<br>2018/6/22</div>
    <svg class="ms-2" width="26" height="28"><path d="M1 4h16v14h-3l-4 4v-4H1z" fill="#fff" stroke="none"/><path d="M3 8h12M3 11h12M3 14h8" stroke="#000"/><circle cx="16" cy="19" r="8" fill="#333" stroke="#777"/><text x="13" y="24" fill="#fff" stroke="none" font-size="12">1</text></svg>
  </div>
</div>
<script src="https://cdn.jsdelivr.net/npm/bootstrap@5.3.0/dist/js/bootstrap.bundle.min.js"></script>
</body>
</html>
